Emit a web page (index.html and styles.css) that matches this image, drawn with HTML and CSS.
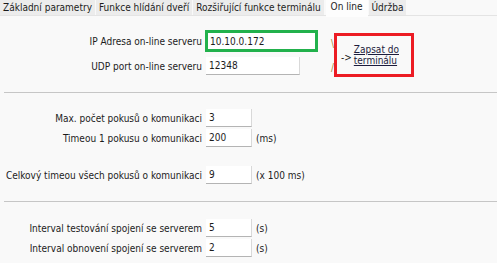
FILE: index.html
```html
<!DOCTYPE html>
<html lang="cs">
<head>
    <meta charset="UTF-8">
    <title>On line</title>
    <link rel="stylesheet" href="styles.css">
</head>
<body>
    <div class="tabs">
        <div class="tab">Základní parametry</div>
        <div class="tab">Funkce hlídání dveří</div>
        <div class="tab">Rozšiřující funkce terminálu</div>
        <div class="tab active">On line</div>
        <div class="tab">Údržba</div>
    </div>

    <div class="section top">
        <div class="rows">
            <div class="row row-ip">
                <label class="label">IP Adresa on-line serveru</label>
                <div class="highlight">
                    <input class="field ip" value="10.10.0.172">
                </div>
            </div>
            <div class="row">
                <label class="label">UDP port on-line serveru</label>
                <input class="field wide" value="12348">
            </div>
        </div>
        <div class="note">
            <span class="bracket b1">\</span>
            <span class="bracket b2">/</span>
            <span class="arrow">-&gt;</span>
            <a href="#" class="write-link">Zapsat do<br>terminálu</a>
        </div>
    </div>
    <div class="sep"></div>

    <div class="section mid">
        <div class="row">
            <label class="label">Max. počet pokusů o komunikaci</label>
            <input class="field" value="3">
        </div>
        <div class="row">
            <label class="label">Timeou 1 pokusu o komunikaci</label>
            <input class="field" value="200">
            <span class="unit">(ms)</span>
        </div>
        <div class="row spaced">
            <label class="label">Celkový timeou všech pokusů o komunikaci</label>
            <input class="field" value="9">
            <span class="unit">(x 100 ms)</span>
        </div>
    </div>
    <div class="sep"></div>

    <div class="section bottom">
        <div class="row">
            <label class="label">Interval testování spojení se serverem</label>
            <input class="field" value="5">
            <span class="unit">(s)</span>
        </div>
        <div class="row">
            <label class="label">Interval obnovení spojení se serverem</label>
            <input class="field" value="2">
            <span class="unit">(s)</span>
        </div>
    </div>
</body>
</html>
```

FILE: styles.css
```css
body {
    margin: 0;
    width: 497px;
    height: 263px;
    overflow: hidden;
    background-color: #f9f9f9;
    font-family: "DejaVu Sans Condensed", "DejaVu Sans", sans-serif;
    font-stretch: condensed;
    font-size: 10px;
    color: #1c1c1c;
}
.tabs {
    display: flex;
    height: 15px;
    border-bottom: 1px solid #e4e4e4;
}
.tab {
    background-color: #ececec;
    padding: 0 3px;
    margin-right: 1px;
    line-height: 16px;
    white-space: nowrap;
}
.tab.active {
    background-color: #fdfdfd;
    height: 17px;
    line-height: 13px;
    margin: 0 1px 0 1px;
    padding: 0 5px;
}
.section {
    display: flex;
    flex-direction: column;
}
.section.top {
    flex-direction: row;
    padding: 14px 0 15px 0;
}
.section.mid {
    padding: 16px 0 17px 0;
    gap: 2px;
}
.section.bottom {
    padding: 17px 0 0 0;
    gap: 2px;
}
.rows {
    display: flex;
    flex-direction: column;
    gap: 5px;
}
.row {
    display: flex;
    align-items: center;
}
.row.spaced {
    margin-top: 17px;
}
.label {
    width: 202px;
    margin-right: 4px;
    text-align: right;
    white-space: nowrap;
}
.row-ip .label {
    margin-right: 3px;
}
.field {
    box-sizing: border-box;
    width: 46px;
    height: 18px;
    padding: 0 0 0 3px;
    margin: 0;
    border: none;
    border-right: 1px solid #d9d9d9;
    border-bottom: 1px solid #b4b4b4;
    background-color: #ffffff;
    font-family: inherit;
    font-stretch: condensed;
    font-size: 10px;
    color: #1c1c1c;
}
.field.wide {
    width: 94px;
}
.highlight {
    border: 3px solid #22b14c;
    background-color: #ffffff;
}
.field.ip {
    width: 107px;
    height: 16px;
    padding-left: 2px;
    border: none;
}
.unit {
    margin-left: 4px;
}
.sep {
    margin-left: 4px;
    border-top: 1px solid #c6c6c6;
}
.note {
    position: relative;
    box-sizing: border-box;
    width: 80px;
    height: 44px;
    margin: 3px 0 0 16px;
    padding-left: 4px;
    border: 3px solid #ec1c24;
    display: flex;
    align-items: center;
    gap: 2px;
}
.bracket {
    position: absolute;
    left: -6px;
    color: #a8863a;
    font-size: 10px;
}
.b1 {
    top: 2px;
}
.b2 {
    top: 26px;
}
.arrow {
    margin-top: 4px;
}
.write-link {
    color: #1c1c3c;
    line-height: 11px;
}
```
